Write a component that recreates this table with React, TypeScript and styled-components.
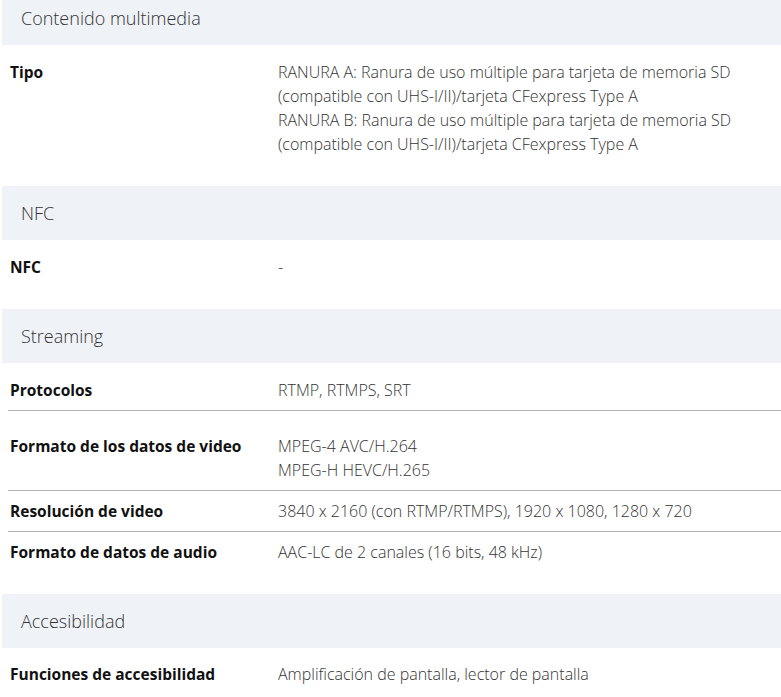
import React from 'react'
import styled, { createGlobalStyle } from 'styled-components'

const GlobalStyle = createGlobalStyle`
  html, body {
    margin: 0;
    padding: 0;
    background: #ffffff;
    overflow: hidden;
  }
  body {
    font-family: 'Open Sans', 'Noto Sans', Arial, sans-serif;
    -webkit-font-smoothing: antialiased;
  }
`

type Row = {
  label: string
  values: string[]
  divider?: boolean
  top?: number
}

type Section = {
  title: string
  rows: Row[]
}

const sections: Section[] = [
  {
    title: 'Contenido multimedia',
    rows: [
      {
        label: 'Tipo',
        values: [
          'RANURA A: Ranura de uso múltiple para tarjeta de memoria SD',
          '(compatible con UHS-I/II)/tarjeta CFexpress Type A',
          'RANURA B: Ranura de uso múltiple para tarjeta de memoria SD',
          '(compatible con UHS-I/II)/tarjeta CFexpress Type A'
        ],
        top: 15
      }
    ]
  },
  {
    title: 'NFC',
    rows: [{ label: 'NFC', values: ['-'], top: 15 }]
  },
  {
    title: 'Streaming',
    rows: [
      { label: 'Protocolos', values: ['RTMP, RTMPS, SRT'], divider: true, top: 15 },
      {
        label: 'Formato de los datos de video',
        values: ['MPEG-4 AVC/H.264', 'MPEG-H HEVC/H.265'],
        divider: true,
        top: 23
      },
      {
        label: 'Resolución de video',
        values: ['3840 x 2160 (con RTMP/RTMPS), 1920 x 1080, 1280 x 720'],
        divider: true,
        top: 8
      },
      { label: 'Formato de datos de audio', values: ['AAC-LC de 2 canales (16 bits, 48 kHz)'], top: 8 }
    ]
  },
  {
    title: 'Accesibilidad',
    rows: [
      { label: 'Funciones de accesibilidad', values: ['Amplificación de pantalla, lector de pantalla'], top: 14 }
    ]
  }
]

const App = () => {
  return (
    <>
      <GlobalStyle />
      <StyledPage>
        {sections.map((section, sIndex) => (
          <StyledSection key={sIndex}>
            <StyledSectionHeader>{section.title}</StyledSectionHeader>
            {section.rows.map((row, rIndex) => (
              <StyledRow key={rIndex} $divider={row.divider} $top={row.top ?? 8}>
                <StyledLabel>{row.label}</StyledLabel>
                <StyledValue>
                  {row.values.map((v, vIndex) => (
                    <div key={vIndex}>{v}</div>
                  ))}
                </StyledValue>
              </StyledRow>
            ))}
          </StyledSection>
        ))}
      </StyledPage>
    </>
  )
}

const StyledPage = styled.div`
  margin-top: -9px;
  padding-left: 2px;
  width: 781px;
  box-sizing: border-box;
`

const StyledSection = styled.section`
  display: flex;
  flex-direction: column;
  padding-bottom: 21px;
`

const StyledSectionHeader = styled.div`
  height: 54px;
  display: flex;
  align-items: center;
  padding-left: 19px;
  background: #eff2f7;
  font-size: 18px;
  font-weight: 300;
  color: #333333;
`

const StyledRow = styled.div<{ $divider?: boolean; $top: number }>`
  display: grid;
  grid-template-columns: 268px 1fr;
  margin-left: 6px;
  padding: ${({ $top }) => $top}px 0 8px 2px;
  border-bottom: 1px solid ${({ $divider }) => ($divider ? '#b4b4b4' : 'transparent')};
  line-height: 24px;
`

const StyledLabel = styled.div`
  font-weight: 700;
  color: #111111;
  font-size: 15.5px;
`

const StyledValue = styled.div`
  font-weight: 300;
  color: #333333;
  font-size: 16px;
`

export default App
